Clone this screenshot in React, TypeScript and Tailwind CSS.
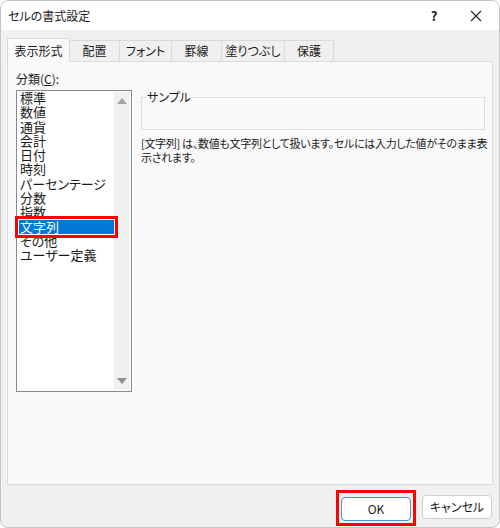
import React from "react";

const tabs = ["表示形式", "配置", "フォント", "罫線", "塗りつぶし", "保護"];
const tabWidths = [63, 50, 52, 50, 63, 49];

const categories = [
  "標準",
  "数値",
  "通貨",
  "会計",
  "日付",
  "時刻",
  "パーセンテージ",
  "分数",
  "指数",
  "文字列",
  "その他",
  "ユーザー定義",
];

const font = { fontFamily: '"Noto Sans CJK JP", "Noto Sans", sans-serif' };

export default function App() {
  return (
    <div
      className="w-[500px] h-[528px] bg-[#f0f0f0] border border-[#c4c4c4] rounded-lg overflow-hidden flex flex-col text-[#1a1a1a] [font-feature-settings:'palt']"
      style={font}
    >
      {/* title bar */}
      <div className="h-[29px] bg-white flex items-center pl-[7px] shrink-0">
        <span className="text-[12px] flex-1">セルの書式設定</span>
        <span className="text-[13px] font-bold w-[30px] text-center mr-[20px]">?</span>
        <svg width="14" height="14" viewBox="0 0 14 14" className="mr-[16px]">
          <path d="M2 2 L12 12 M12 2 L2 12" stroke="#222" strokeWidth="1.1" />
        </svg>
      </div>

      {/* tabs */}
      <div className="flex items-end pl-[6px] pt-[8px] h-[31px] shrink-0">
        {tabs.map((t, i) =>
          i === 0 ? (
            <div
              key={t}
              className="h-[24px] bg-[#f9f9f9] border border-b-0 border-[#d9d9d9] flex items-center justify-center text-[12px] relative z-10 -mb-px"
              style={{ width: tabWidths[i] }}
            >
              {t}
            </div>
          ) : (
            <div
              key={t}
              className="h-[21px] bg-[#f0f0f0] border border-l-0 border-b-0 border-[#d9d9d9] flex items-center justify-center text-[12px]"
              style={{ width: tabWidths[i] }}
            >
              {t}
            </div>
          )
        )}
      </div>

      {/* panel */}
      <div className="mx-[6px] h-[424px] bg-[#f9f9f9] border border-[#dcdcdc] shrink-0 flex pl-[8px] pt-[9px]">
        {/* left: category list */}
        <div className="w-[116px] flex flex-col">
          <div className="text-[12px] h-[19px] leading-[16px]">
            分類(<span className="underline">C</span>):
          </div>
          <div className="h-[302px] bg-white border border-[#868a91] flex">
            <div className="flex-1 flex flex-col pl-[2px]">
              {categories.map((c) => (
                <div
                  key={c}
                  className={
                    c === "文字列"
                      ? "relative h-[14.3px] leading-[14.3px] text-[13px] pl-px bg-[#0078d7] text-white"
                      : "h-[14.3px] leading-[14.3px] text-[13px] pl-px"
                  }
                >
                  {c}
                  {c === "文字列" && (
                    <div className="absolute left-[-4px] right-[-4px] top-[-4px] bottom-[-4px] border-[3px] border-[#ff0000]" />
                  )}
                </div>
              ))}
            </div>
            <div className="w-[16px] bg-[#f0f0f0] flex flex-col justify-between items-center py-[6px] my-px mr-px">
              <svg width="10" height="6" viewBox="0 0 10 6">
                <path d="M0 6 L5 0 L10 6 Z" fill="#a3a3a3" />
              </svg>
              <svg width="10" height="6" viewBox="0 0 10 6">
                <path d="M0 0 L5 6 L10 0 Z" fill="#8f8f8f" />
              </svg>
            </div>
          </div>
        </div>

        {/* right: sample + description */}
        <div className="ml-[9px] w-[348px] flex flex-col">
          <div className="relative mt-[26px] h-[33px] w-[344px] border border-[#dcdcdc]">
            <span className="absolute left-[5px] top-[-9px] bg-[#f9f9f9] pr-[2px] text-[12px] leading-[16px]">
              サンプル
            </span>
          </div>
          <p className="mt-[6px] text-[11px] leading-[14px] tracking-[-0.3px]">
            [文字列] は、数値も文字列として扱います。セルには入力した値がそのまま表示されます。
          </p>
        </div>
      </div>

      {/* footer */}
      <div className="flex justify-end items-start pt-[10px] pr-[7px] gap-[11px]">
        <div className="relative">
          <button className="w-[70px] h-[24px] bg-white border-[1.5px] border-[#4a90d9] rounded-[4px] text-[12px]">
            OK
          </button>
          <div className="absolute left-[-5px] right-[-5px] top-[-5px] bottom-[-5px] border-[3px] border-[#ff0000]" />
        </div>
        <button className="w-[70px] h-[24px] bg-white border border-[#cfcfcf] rounded-[4px] text-[12px]">
          キャンセル
        </button>
      </div>
    </div>
  );
}
